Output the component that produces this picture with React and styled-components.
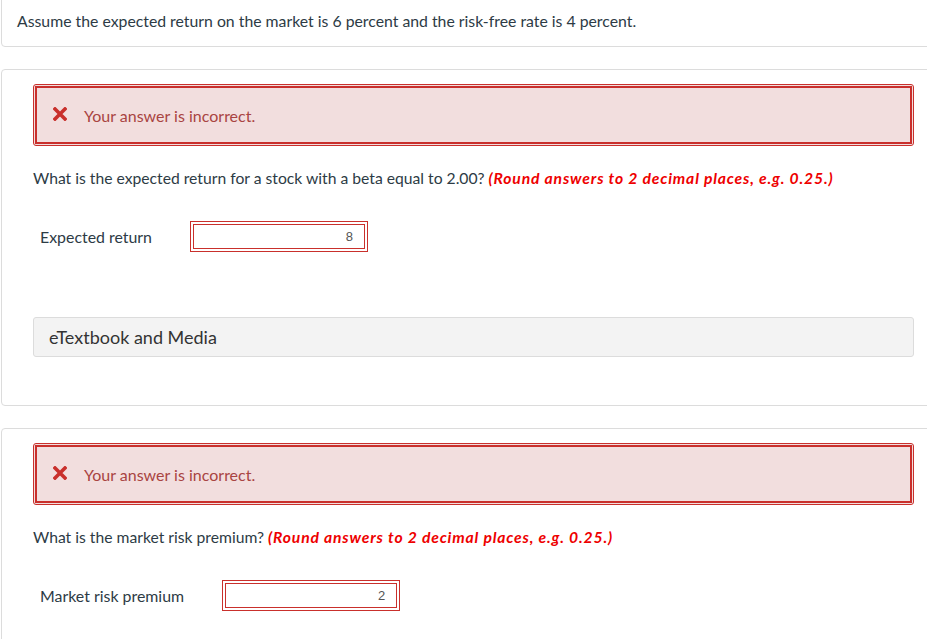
import React from 'react';
import styled, { createGlobalStyle } from 'styled-components';

const GlobalStyle = createGlobalStyle`
  html, body {
    margin: 0;
    padding: 0;
    background: #fff;
    overflow: hidden;
  }
  body {
    font-family: Lato, "Open Sans", "Liberation Sans", sans-serif;
    color: #2d3b45;
  }
`;

const Page = styled.div`
  display: flex;
  flex-direction: column;
  gap: 22px;
  padding-left: 1px;
  margin-top: -8px;
  width: 960px;
`;

const Panel = styled.div`
  border: 1px solid #dcdcdc;
  border-radius: 4px;
  background: #fff;
  padding: ${p => p.$pad || '14px 31px 48px 31px'};
  box-sizing: border-box;
  width: 945px;
`;

const Intro = styled.p`
  margin: 0;
  font-size: 15.8px;
  line-height: 20px;
`;

const AlertOuter = styled.div`
  border: 1px solid #c9302c;
  border-radius: 3px;
  padding: 1px;
  background: #f2dede;
`;

const AlertInner = styled.div`
  display: flex;
  align-items: center;
  height: 54px;
  border: 2px solid #c9302c;
  background: #f2dede;
  padding-left: 16px;
  color: #a94442;
  font-size: 16px;
`;

const XIcon = styled.svg`
  width: 14px;
  height: 14px;
  margin-right: 17px;
  margin-top: -2px;
`;

const Question = styled.p`
  margin: ${p => p.$m};
  font-size: 15.7px;
  line-height: 20px;
`;

const Hint = styled.span`
  color: #ee0000;
  font-weight: 700;
  font-style: italic;
  letter-spacing: 0.83px;
`;

const AnswerRow = styled.div`
  display: flex;
  align-items: center;
  gap: 38px;
  padding-left: 7px;
  margin-top: ${p => p.$top};
`;

const Label = styled.span`
  font-size: 15.9px;
`;

const InputOuter = styled.div`
  border: 1px solid #c9302c;
  padding: 2px;
  width: 172px;
  height: 25px;
  box-sizing: content-box;
`;

const InputInner = styled.div`
  box-sizing: border-box;
  height: 100%;
  border: 1px solid #c9302c;
  display: flex;
  align-items: center;
  justify-content: flex-end;
  padding-right: 11px;
  font-size: 13px;
  color: #555;
  font-family: "Liberation Sans", Arial, sans-serif;
`;

const MediaBox = styled.div`
  margin-top: 65px;
  height: 40px;
  box-sizing: border-box;
  border: 1px solid #dcdcdc;
  border-radius: 3px;
  background: #f3f3f3;
  display: flex;
  align-items: center;
  padding-left: 15px;
  font-size: 18px;
  color: #333;
`;

function Cross() {
  return (
    <XIcon viewBox="0 0 14 14">
      <path d="M2 2 L12 12 M12 2 L2 12" stroke="#c9302c" strokeWidth="3.6" strokeLinecap="square" />
    </XIcon>
  );
}

function Incorrect() {
  return (
    <AlertOuter>
      <AlertInner>
        <Cross />
        Your answer is incorrect.
      </AlertInner>
    </AlertOuter>
  );
}

function Answer({ label, value, top }) {
  return (
    <AnswerRow $top={top}>
      <Label>{label}</Label>
      <InputOuter>
        <InputInner>{value}</InputInner>
      </InputOuter>
    </AnswerRow>
  );
}

export default function App() {
  return (
    <>
      <GlobalStyle />
      <Page>
        <Panel $pad="18px 15px 15px 15px">
          <Intro>Assume the expected return on the market is 6 percent and the risk-free rate is 4 percent.</Intro>
        </Panel>

        <Panel>
          <Incorrect />
          <Question $m="22px 0 0 0">
            What is the expected return for a stock with a beta equal to 2.00? <Hint>(Round answers to 2 decimal places, e.g. 0.25.)</Hint>
          </Question>
          <Answer label="Expected return" value="8" top="33px" />
          <MediaBox>eTextbook and Media</MediaBox>
        </Panel>

        <Panel>
          <Incorrect />
          <Question $m="22px 0 0 0">
            What is the market risk premium? <Hint>(Round answers to 2 decimal places, e.g. 0.25.)</Hint>
          </Question>
          <Answer label="Market risk premium" value="2" top="33px" />
        </Panel>
      </Page>
    </>
  );
}
